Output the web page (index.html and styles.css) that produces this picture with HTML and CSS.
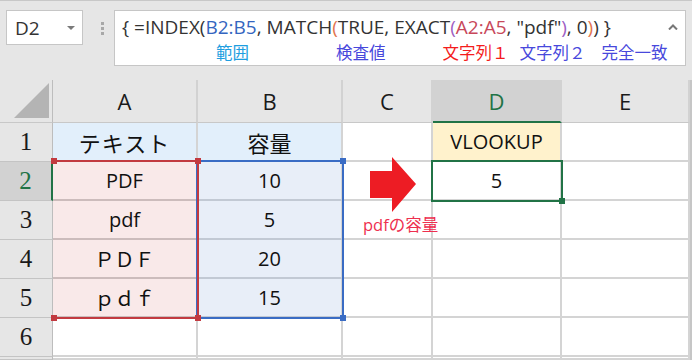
FILE: index.html
```html
<!DOCTYPE html>
<html lang="ja">
<head>
  <meta charset="UTF-8" />
  <title>INDEX / MATCH / EXACT</title>
  <link rel="stylesheet" href="styles.css">
</head>
<body>
  <div class="formula-bar">
    <div class="name-box">D2<span class="drop"></span></div>
    <div class="grip"><i></i><i></i><i></i></div>
    <div class="formula-box">
      <div class="formula">{ =INDEX(<span class="ref-b">B2:B5</span>, MATCH<span class="p2">(</span>TRUE, EXACT<span class="p3">(</span><span class="ref-a">A2:A5</span>, "pdf"<span class="p3">)</span>, 0<span class="p2">)</span>) }</div>
      <div class="arg-labels">
        <span class="lbl cyan l1">範囲</span>
        <span class="lbl blue l2">検査値</span>
        <span class="lbl red l3">文字列１</span>
        <span class="lbl blue l4">文字列２</span>
        <span class="lbl blue l5">完全一致</span>
      </div>
      <svg class="collapse" viewBox="0 0 10 6"><polyline points="1,5.5 5,1.5 9,5.5" /></svg>
    </div>
  </div>

  <div class="sheet">
    <div class="corner"><span></span></div>
    <div class="hd">A</div>
    <div class="hd">B</div>
    <div class="hd">C</div>
    <div class="hd on">D</div>
    <div class="hd">E</div>

    <div class="rh">1</div>
    <div class="c head-blue jp spaced">テキスト</div>
    <div class="c head-blue jp">容量</div>
    <div class="c"></div>
    <div class="c yellow">VLOOKUP</div>
    <div class="c"></div>

    <div class="rh on">2</div>
    <div class="c pink">PDF</div>
    <div class="c lblue">10</div>
    <div class="c"></div>
    <div class="c">5</div>
    <div class="c"></div>

    <div class="rh">3</div>
    <div class="c pink">pdf</div>
    <div class="c lblue">5</div>
    <div class="c"></div>
    <div class="c"></div>
    <div class="c"></div>

    <div class="rh">4</div>
    <div class="c pink">ＰＤＦ</div>
    <div class="c lblue">20</div>
    <div class="c"></div>
    <div class="c"></div>
    <div class="c"></div>

    <div class="rh">5</div>
    <div class="c pink">ｐｄｆ</div>
    <div class="c lblue">15</div>
    <div class="c"></div>
    <div class="c"></div>
    <div class="c"></div>

    <div class="rh">6</div>
    <div class="c"></div>
    <div class="c"></div>
    <div class="c"></div>
    <div class="c"></div>
    <div class="c"></div>

    <div class="rh"></div>
    <div class="c"></div>
    <div class="c"></div>
    <div class="c"></div>
    <div class="c"></div>
    <div class="c"></div>

    <!-- reference highlights drawn over the grid -->
    <div class="range range-b"><i class="h tr"></i><i class="h br"></i></div>
    <div class="range range-a"><i class="h tl"></i><i class="h tr"></i><i class="h bl"></i><i class="h br"></i></div>
    <div class="range sel"><i class="h br"></i></div>

    <svg class="arrow" viewBox="0 0 46 55"><polygon points="0,14 22,14 22,0 46,27 22,55 22,41 0,41" /></svg>
    <div class="note">pdfの容量</div>
  </div>
</body>
</html>
```

FILE: styles.css
```css
* {
  margin: 0;
  padding: 0;
  box-sizing: border-box;
}

body {
  width: 692px;
  height: 360px;
  overflow: hidden;
  background: #fff;
  font-family: "Open Sans", "Noto Sans CJK JP", sans-serif;
  color: #111;
}

/* formula bar */

.formula-bar {
  height: 80px;
  display: flex;
  align-items: flex-start;
  padding: 9px 0 0 6px;
  background: #e6e6e6;
  border-top: 1px solid #c8c8c8;
}

.name-box {
  width: 77px;
  height: 35px;
  display: flex;
  align-items: center;
  justify-content: space-between;
  padding: 0 7px 0 8px;
  background: #fff;
  border: 1px solid #c6c6c6;
  font-size: 19px;
  color: #333;
}

.drop {
  width: 0;
  height: 0;
  border-left: 4px solid transparent;
  border-right: 4px solid transparent;
  border-top: 4px solid #7a7a7a;
}

.grip {
  display: flex;
  flex-direction: column;
  gap: 2px;
  margin: 12px 10px 0 18px;
}

.grip i {
  width: 3px;
  height: 3px;
  background: #a8a8a8;
}

.formula-box {
  position: relative;
  width: 572px;
  height: 56px;
  padding: 4px 0 0 7px;
  background: #fff;
  border: 1px solid #c6c6c6;
}

.formula {
  font-size: 19px;
  line-height: 25px;
  color: #333;
  white-space: nowrap;
}

.ref-b { color: #3465c0; }
.ref-a { color: #c8485a; }
.p2 { color: #e2744f; }
.p3 { color: #9d5fc4; }

.arg-labels {
  display: flex;
  margin-top: 2px;
  font-size: 16.5px;
  line-height: 22px;
  white-space: nowrap;
}

.lbl.cyan { color: #1e9ee0; }
.lbl.blue { color: #4848dc; }
.lbl.red { color: #f41c1c; }

.l1 { margin-left: 94px; }
.l2 { margin-left: 87px; }
.l3 { margin-left: 57px; }
.l4 { margin-left: 11px; }
.l5 { margin-left: 16px; }

.collapse {
  position: absolute;
  top: 13px;
  right: 7px;
  width: 10px;
  height: 6px;
  fill: none;
  stroke: #777;
  stroke-width: 2;
}

/* sheet grid */

.sheet {
  position: relative;
  display: grid;
  grid-template-columns: 53px 145px 145px 90px 129px 128px;
  grid-template-rows: 43px repeat(6, 39px) 3px;
  width: 692px;
  border-right: 2px solid #c6c6c6;
}

.corner {
  display: flex;
  align-items: flex-end;
  justify-content: flex-end;
  padding: 0 3px 4px 0;
  background: #e6e6e6;
  border-right: 1px solid #bdbdbd;
  border-bottom: 1px solid #c8c8c8;
}

.corner span {
  width: 35px;
  height: 35px;
  background: #b4b4b4;
  clip-path: polygon(100% 0, 100% 100%, 0 100%);
}

.hd {
  display: flex;
  align-items: center;
  justify-content: center;
  background: #e6e6e6;
  border-right: 2px solid #d2d2d2;
  border-bottom: 1px solid #c8c8c8;
  font-size: 22px;
  color: #1a1a1a;
}

.hd.on {
  background: #d2d2d2;
  color: #217346;
  border-bottom: 2px solid #217346;
}

.rh {
  display: flex;
  align-items: center;
  justify-content: center;
  background: #e6e6e6;
  border-right: 1px solid #bdbdbd;
  border-bottom: 1px solid #c4c4c4;
  font-family: "Liberation Serif", serif;
  font-size: 25px;
  color: #1a1a1a;
}

.rh.on {
  background: #d2d2d2;
  color: #217346;
  border-right: 2px solid #217346;
}

.c {
  display: flex;
  align-items: center;
  justify-content: center;
  border-right: 2px solid #d4d4d4;
  border-bottom: 2px solid #d4d4d4;
  font-size: 20px;
}

.c.jp { font-size: 22px; }
.c.spaced { letter-spacing: 1px; }

.head-blue { background: #e2effb; }
.yellow { background: #fff2cc; }
.pink { background: #f9e9e9; border-bottom-color: #ccbcbc; }
.lblue { background: #e8eef8; border-bottom-color: #c2c9d4; }

/* range outlines */

.range {
  position: absolute;
  top: -2px;
  left: -2px;
  right: -1px;
  bottom: -1px;
  border: 2px solid;
}

.range-a {
  grid-column: 2 / 3;
  grid-row: 3 / 7;
  left: 0;
  border-color: #c23a40;
  border-left: none;
  color: #c23a40;
}

.range-b {
  grid-column: 3 / 4;
  grid-row: 3 / 7;
  border-color: #3a6cc4;
  color: #3a6cc4;
}

.sel {
  grid-column: 5 / 6;
  grid-row: 3 / 4;
  border-color: #217346;
  color: #217346;
}

.h {
  position: absolute;
  width: 6px;
  height: 6px;
  background: currentColor;
}

.h.tl { top: -4px; left: -2px; }
.h.tr { top: -4px; right: -4px; }
.h.bl { bottom: -4px; left: -2px; }
.h.br { bottom: -4px; right: -4px; }

.arrow {
  position: absolute;
  grid-column: 4 / 5;
  grid-row: 3 / 4;
  top: -5px;
  left: 27px;
  width: 46px;
  height: 55px;
  fill: #ed1c24;
}

.note {
  position: absolute;
  grid-column: 4 / 5;
  grid-row: 4 / 5;
  top: 9px;
  left: 20px;
  font-size: 16.5px;
  line-height: 30px;
  color: #ee2f4f;
  white-space: nowrap;
}
```
